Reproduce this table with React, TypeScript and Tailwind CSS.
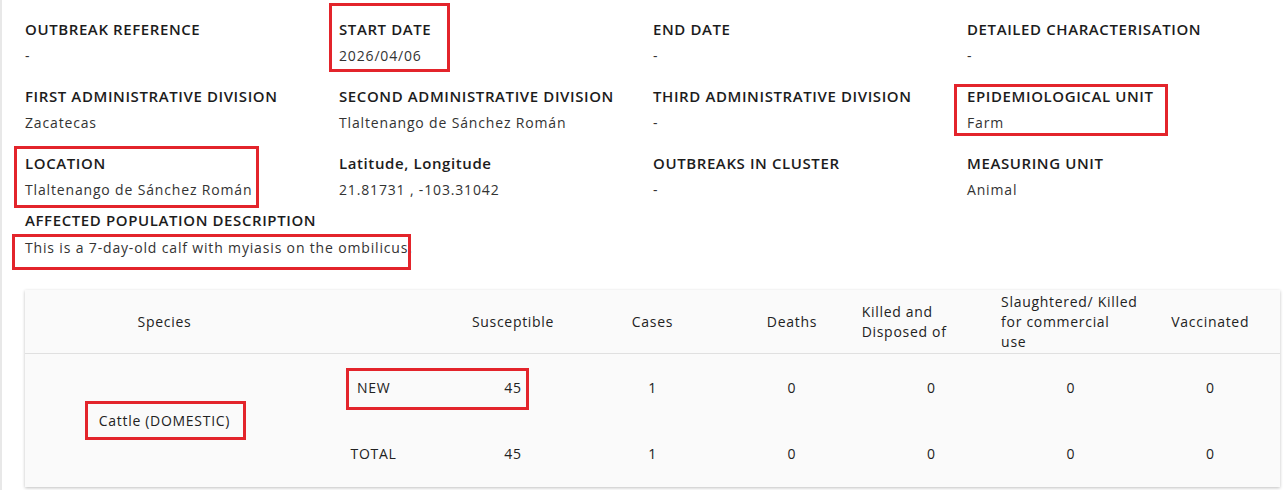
import React from "react";

interface Field {
  label: string;
  value: string;
}

const fields: Field[] = [
  { label: "OUTBREAK REFERENCE", value: "-" },
  { label: "START DATE", value: "2026/04/06" },
  { label: "END DATE", value: "-" },
  { label: "DETAILED CHARACTERISATION", value: "-" },
  { label: "FIRST ADMINISTRATIVE DIVISION", value: "Zacatecas" },
  { label: "SECOND ADMINISTRATIVE DIVISION", value: "Tlaltenango de Sánchez Román" },
  { label: "THIRD ADMINISTRATIVE DIVISION", value: "-" },
  { label: "EPIDEMIOLOGICAL UNIT", value: "Farm" },
  { label: "LOCATION", value: "Tlaltenango de Sánchez Román" },
  { label: "Latitude, Longitude", value: "21.81731 , -103.31042" },
  { label: "OUTBREAKS IN CLUSTER", value: "-" },
  { label: "MEASURING UNIT", value: "Animal" },
];

const counts = ["45", "1", "0", "0", "0", "0"];

// red annotation boxes drawn over the screenshot
const marks = [
  "left-[327px] top-[3px] w-[121px] h-[69px]",
  "left-[952px] top-[84px] w-[214px] h-[52px]",
  "left-[12px] top-[146px] w-[245px] h-[62px]",
  "left-[10px] top-[234px] w-[399px] h-[36px]",
  "left-[344px] top-[368px] w-[183px] h-[42px]",
  "left-[83px] top-[401px] w-[161px] h-[39px]",
];

function Label({ children }: { children: React.ReactNode }) {
  return (
    <div className="text-[15px] leading-[22px] font-semibold tracking-[0.04em] text-[#1c1c1c] whitespace-nowrap">
      {children}
    </div>
  );
}

function Value({ children }: { children: React.ReactNode }) {
  return (
    <div className="text-[14px] leading-[22px] tracking-[0.06em] text-[#333333] whitespace-nowrap">
      {children}
    </div>
  );
}

export default function App() {
  return (
    <div className="relative w-[1288px] h-[490px] overflow-hidden bg-white border-l-2 border-[#e8e8e8] font-['Open_Sans',sans-serif]">
      <div className="pl-[23px] pt-[18px]">
        <div className="grid grid-cols-[repeat(4,314px)] gap-y-[18px]">
          {fields.map((f) => (
            <div key={f.label} className="flex flex-col gap-[5px]">
              <Label>{f.label}</Label>
              <Value>{f.value}</Value>
            </div>
          ))}
        </div>

        <div className="mt-[8px] flex flex-col gap-[6px]">
          <Label>AFFECTED POPULATION DESCRIPTION</Label>
          <Value>This is a 7-day-old calf with myiasis on the ombilicus.</Value>
        </div>

        <div className="mt-[31px] w-[1255px] bg-[#fafafa] shadow-[0_1px_3px_rgba(0,0,0,0.25)] text-[14px] tracking-[0.05em] text-[#222222]">
          <div className="grid grid-cols-[2fr_repeat(7,1fr)] h-[64px] border-b border-[#e0e0e0] leading-[20px]">
            <div className="flex items-center justify-center">Species</div>
            <div />
            <div className="flex items-center justify-center">Susceptible</div>
            <div className="flex items-center justify-center">Cases</div>
            <div className="flex items-center justify-center">Deaths</div>
            <div className="flex items-center">
              <span className="w-full text-left">
                Killed and
                <br />
                Disposed of
              </span>
            </div>
            <div className="flex items-center">
              <span className="w-full text-left whitespace-nowrap">
                Slaughtered/ Killed
                <br />
                for commercial
                <br />
                use
              </span>
            </div>
            <div className="flex items-center justify-center">Vaccinated</div>
          </div>

          <div className="grid grid-cols-[2fr_repeat(7,1fr)] grid-rows-[66px_67px] font-medium">
            <div className="row-span-2 flex items-center justify-center font-normal">
              Cattle (DOMESTIC)
            </div>
            <div className="flex items-center justify-center">NEW</div>
            {counts.map((c, i) => (
              <div key={"n" + i} className="flex items-center justify-center">
                {c}
              </div>
            ))}
            <div className="flex items-center justify-center">TOTAL</div>
            {counts.map((c, i) => (
              <div key={"t" + i} className="flex items-center justify-center">
                {c}
              </div>
            ))}
          </div>
        </div>
      </div>

      {marks.map((m) => (
        <div key={m} className={`absolute ${m} border-[3px] border-[#e3242b] pointer-events-none`} />
      ))}
    </div>
  );
}
